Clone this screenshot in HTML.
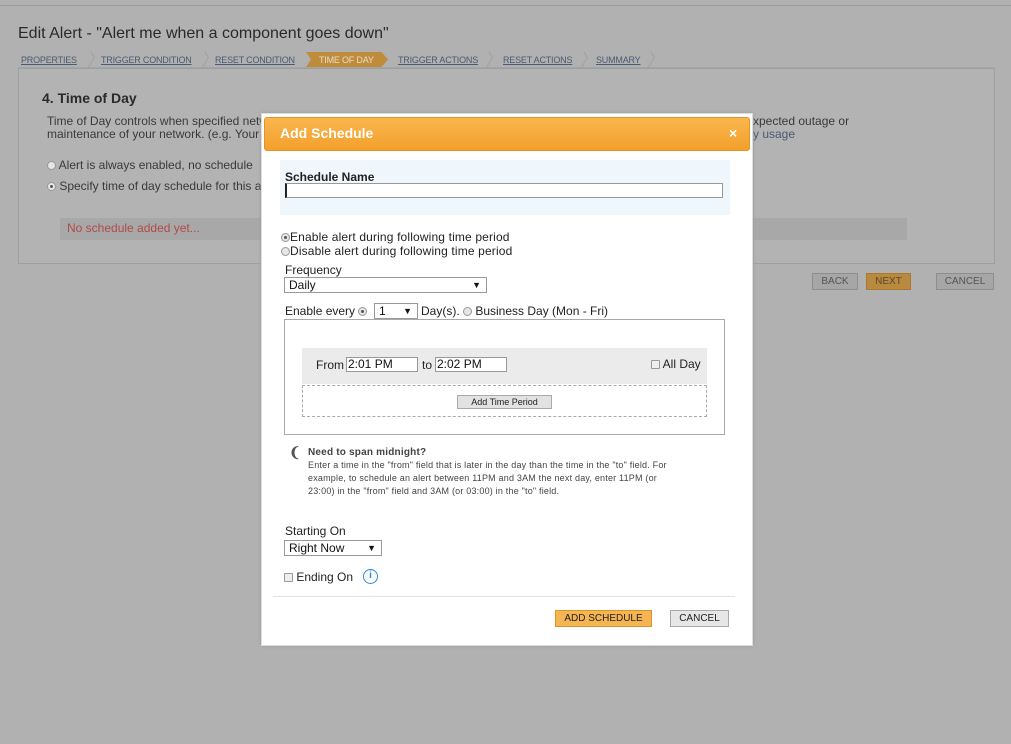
<!DOCTYPE html>
<html><head><style>
*{margin:0;padding:0;box-sizing:border-box}
body{width:1011px;height:744px;background:#b1b1b1;font-family:"Liberation Sans",sans-serif;position:relative;overflow:hidden;color:#333}
.a{position:absolute;white-space:nowrap}
.bc{font-size:9px;color:#4a5a72;text-decoration:underline}
.chev{position:absolute;top:52px;width:9px;height:16px;border-right:1px solid #9c9c9c;border-top:1px solid #9c9c9c;transform:scale(0.6,1) rotate(45deg);transform-origin:center}
.btn{position:absolute;font-size:10px;text-align:center;border:1px solid #8e8e8e;line-height:15px}
.rad{display:inline-block;width:9px;height:9px;border-radius:50%;border:1px solid #999;background:#e6e6e6;vertical-align:-1px;position:relative}
.rad.on::after{content:"";position:absolute;left:2px;top:2px;width:3px;height:3px;border-radius:50%;background:#555}
.sel{position:absolute;border:1px solid #999;background:#fff;font-size:12px;color:#111;padding-left:4px;line-height:14px}
.sel::after{content:"▼";position:absolute;right:5px;top:0;font-size:9px}
</style></head><body>
<div class="a" style="left:0;top:0;width:1011px;height:6px;border-bottom:1px solid #9a9a9a"></div>
<div class="a" style="left:18px;top:25px;font-size:16px;color:#2a2a2a">Edit Alert - "Alert me when a component goes down"</div>
<div class="a" style="left:18px;top:52px;width:976px;height:16px;border-bottom:1px solid #a5a5a5"></div>
<div class="a bc" style="left:21px;top:55px;letter-spacing:-0.2px">PROPERTIES</div>
<div class="chev" style="left:85px"></div>
<div class="a bc" style="left:101px;top:55px;letter-spacing:-0.2px">TRIGGER CONDITION</div>
<div class="chev" style="left:199px"></div>
<div class="a bc" style="left:215px;top:55px;letter-spacing:-0.2px">RESET CONDITION</div>
<div class="a" style="left:306px;top:52px;width:82px;height:15px;background:#bf8c3c;clip-path:polygon(0 0,92% 0,100% 50%,92% 100%,0 100%,6% 50%)"></div>
<div class="a" style="left:319px;top:55px;font-size:9px;color:#e8dcc8;letter-spacing:-0.2px">TIME OF DAY</div>
<div class="a bc" style="left:398px;top:55px;letter-spacing:-0.2px">TRIGGER ACTIONS</div>
<div class="chev" style="left:483px"></div>
<div class="a bc" style="left:503px;top:55px;letter-spacing:-0.2px">RESET ACTIONS</div>
<div class="chev" style="left:578px"></div>
<div class="a bc" style="left:596px;top:55px;letter-spacing:-0.2px">SUMMARY</div>
<div class="chev" style="left:645px"></div>
<div class="a" style="left:18px;top:68px;width:977px;height:196px;border:1px solid #9f9f9f;background:#b3b3b3"></div>
<div class="a" style="left:42px;top:90px;font-size:14px;font-weight:bold;color:#2a2a2a">4. Time of Day</div>
<div class="a" style="left:47px;top:115px;font-size:12px;color:#3a3a3a;line-height:13px">Time of Day controls when specified network ...<br>maintenance of your network. (e.g. Your</div>
<div class="a" style="left:753px;top:115px;font-size:12px;color:#3a3a3a;line-height:13px">xpected outage or<br><span style="color:#4a5a72">y usage</span></div>
<div class="a" style="left:47px;top:158px;font-size:12px;color:#3a3a3a"><span class="rad"></span> Alert is always enabled, no schedule</div>
<div class="a" style="left:47px;top:179px;font-size:12px;color:#3a3a3a"><span class="rad on"></span> Specify time of day schedule for this a</div>
<div class="a" style="left:60px;top:218px;width:847px;height:22px;background:#a8a8a8"></div>
<div class="a" style="left:67px;top:221px;font-size:12px;color:#b04a4a">No schedule added yet...</div>
<div class="btn" style="left:812px;top:273px;width:46px;background:#a6a6a6;color:#555">BACK</div>
<div class="btn" style="left:866px;top:273px;width:45px;background:#b8893f;color:#5a4a2a;border-color:#a87a30">NEXT</div>
<div class="btn" style="left:936px;top:273px;width:58px;background:#a6a6a6;color:#555">CANCEL</div>

<div class="a" style="left:261px;top:113px;width:492px;height:533px;background:#fff;border:1px solid #ddd;box-shadow:0 0 3px #999"></div>
<div class="a" style="left:264px;top:117px;width:486px;height:34px;background:linear-gradient(#f9b64e,#f3a02c);border:1px solid #e5922a;border-radius:3px"></div>
<div class="a" style="left:280px;top:125px;font-size:14px;font-weight:bold;color:#fff">Add Schedule</div>
<div class="a" style="left:729px;top:125px;font-size:14px;font-weight:bold;color:#fff">×</div>
<div class="a" style="left:280px;top:160px;width:450px;height:55px;background:#eff6fc"></div>
<div class="a" style="left:285px;top:170px;font-size:12px;font-weight:bold;color:#222">Schedule Name</div>
<div class="a" style="left:285px;top:183px;width:438px;height:15px;border:1px solid #999;background:#fff;border-left:2px solid #222"></div>
<div class="a" style="left:281px;top:230px;font-size:12px;color:#222;line-height:14px;letter-spacing:0.15px"><span class="rad on"></span>Enable alert during following time period<br><span class="rad"></span>Disable alert during following time period</div>
<div class="a" style="left:285px;top:263px;font-size:12px;color:#222">Frequency</div>
<div class="sel" style="left:284px;top:277px;width:203px;height:16px">Daily</div>
<div class="a" style="left:285px;top:304px;font-size:12px;color:#222">Enable every <span class="rad on"></span></div>
<div class="sel" style="left:374px;top:303px;width:44px;height:16px">1</div>
<div class="a" style="left:421px;top:304px;font-size:12px;color:#222">Day(s). <span class="rad"></span> Business Day (Mon - Fri)</div>
<div class="a" style="left:284px;top:319px;width:441px;height:116px;border:1px solid #aaa"></div>
<div class="a" style="left:302px;top:348px;width:405px;height:36px;background:#ebebeb"></div>
<div class="a" style="left:316px;top:358px;font-size:12px;color:#222">From</div>
<div class="a" style="left:346px;top:357px;width:72px;height:15px;border:1px solid #999;background:#fff;font-size:12px;color:#111;padding-left:1px;line-height:13px">2:01 PM</div>
<div class="a" style="left:422px;top:358px;font-size:12px;color:#222">to</div>
<div class="a" style="left:435px;top:357px;width:72px;height:15px;border:1px solid #999;background:#fff;font-size:12px;color:#111;padding-left:1px;line-height:13px">2:02 PM</div>
<div class="a" style="left:651px;top:357px;font-size:12px;color:#222"><span class="rad" style="border-radius:1px;background:#eee"></span> All Day</div>
<div class="a" style="left:302px;top:385px;width:405px;height:32px;border:1px dashed #aaa"></div>
<div class="a" style="left:457px;top:395px;width:95px;height:14px;background:#e2e2e2;border:1px solid #aaa;font-size:9px;text-align:center;line-height:12px;color:#222">Add Time Period</div>
<div class="a" style="left:289px;top:444px;font-size:14px;color:#555;font-weight:bold">&#x2768;</div>
<div class="a" style="left:308px;top:446px;font-size:9px;color:#444;line-height:13px;letter-spacing:0.2px"><b style="font-size:10px">Need to span midnight?</b><br>Enter a time in the "from" field that is later in the day than the time in the "to" field. For<br>example, to schedule an alert between 11PM and 3AM the next day, enter 11PM (or<br>23:00) in the "from" field and 3AM (or 03:00) in the "to" field.</div>
<div class="a" style="left:285px;top:524px;font-size:12px;color:#222">Starting On</div>
<div class="sel" style="left:284px;top:540px;width:98px;height:16px">Right Now</div>
<div class="a" style="left:284px;top:570px;font-size:12px;color:#222"><span class="rad" style="border-radius:1px;background:#eee"></span> Ending On</div>
<div class="a" style="left:363px;top:569px;width:15px;height:15px;border:1.5px solid #2d8fd0;border-radius:50%;color:#2d8fd0;font-size:10px;text-align:center;line-height:12px;font-weight:bold">i</div>
<div class="a" style="left:273px;top:596px;width:462px;height:1px;background:#e2e2e2"></div>
<div class="btn" style="left:555px;top:610px;width:97px;height:17px;background:#f5b552;border-color:#d9952a;color:#222">ADD SCHEDULE</div>
<div class="btn" style="left:670px;top:610px;width:59px;height:17px;background:#e6e6e6;border-color:#aaa;color:#222">CANCEL</div>
</body></html>
